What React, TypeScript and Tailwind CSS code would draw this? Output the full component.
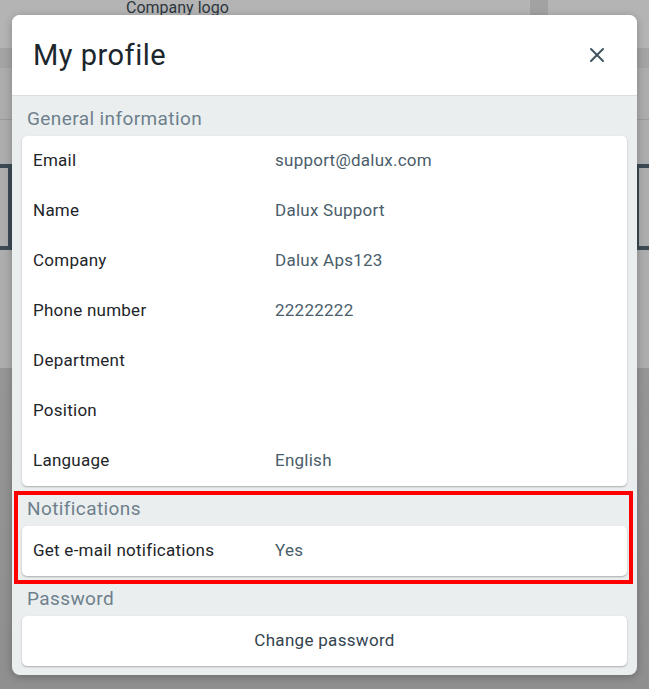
import { X } from "lucide-react";

const generalRows = [
  { label: "Email", value: "support@dalux.com" },
  { label: "Name", value: "Dalux Support" },
  { label: "Company", value: "Dalux Aps123" },
  { label: "Phone number", value: "22222222" },
  { label: "Department", value: "" },
  { label: "Position", value: "" },
  { label: "Language", value: "English" },
];

const Row = ({ label, value }: { label: string; value: string }) => (
  <div className="flex h-[50px] items-center pl-[11px] tracking-[0.25px]">
    <span className="w-[242px] text-[17px] text-[#1e2529]">{label}</span>
    <span className="text-[17px] text-[#4a5d6a]">{value}</span>
  </div>
);

const SectionTitle = ({ children }: { children: string }) => (
  <div className="flex h-[40px] items-end pb-[5px] pl-[5px] text-[19px] leading-[24px] tracking-[0.4px] text-[#6e808c]">
    {children}
  </div>
);

const Card = ({ children }: { children: React.ReactNode }) => (
  <div className="rounded-[5px] bg-white shadow-[0_1px_2px_rgba(0,0,0,0.28)]">
    {children}
  </div>
);

const App = () => {
  return (
    <div
      className="relative h-[689px] w-[649px] overflow-hidden"
      style={{ fontFamily: "Roboto, 'Liberation Sans', sans-serif" }}
    >
      {/* dimmed page behind the dialog */}
      <div className="flex h-full flex-col">
        <div className="flex h-[48px] bg-[#b4b4b4]">
          <span className="ml-[126px] -mt-[4px] text-[16px] text-[#2c3740]">Company logo</span>
          <div className="ml-auto mr-[101px] w-[18px] bg-[#a2a2a2]" />
        </div>
        <div className="h-[20px] bg-[#a4a4a4]" />
        <div className="flex h-[300px] flex-col bg-[#adadad]">
          <div className="h-[52px] border-b border-[#9a9a9a] text-[20px] font-medium leading-[64px] text-[#1b2227] -ml-[14px]">
            e
          </div>
          <div className="mt-[44px] flex justify-between">
            <div className="h-[86px] w-[12px] border-y-[4px] border-r-[4px] border-[#3b4a55]" />
            <div className="h-[86px] w-[14px] rounded-l-[3px] border-y-[4px] border-l-[4px] border-[#3b4a55]" />
          </div>
        </div>
        <div className="flex-1 bg-gradient-to-b from-[#969696] to-[#8f8f8f]" />
      </div>

      {/* dialog */}
      <div className="absolute left-[12px] top-[15px] flex h-[660px] w-[625px] flex-col overflow-hidden rounded-[8px] bg-[#eaeeef] shadow-[0_2px_8px_rgba(0,0,0,0.25)]">
        <div className="flex h-[81px] shrink-0 items-center justify-between border-b border-[#d9dee1] bg-white pl-[21px] pr-[28px]">
          <h1 className="text-[29px] leading-none tracking-[0.5px] text-[#1c262d]">My profile</h1>
          <X size={24} strokeWidth={2} className="text-[#3f5361]" />
        </div>
        <div className="px-[10px]">
          <SectionTitle>General information</SectionTitle>
          <Card>
            {generalRows.map((r) => (
              <Row key={r.label} label={r.label} value={r.value} />
            ))}
          </Card>
          <SectionTitle>Notifications</SectionTitle>
          <Card>
            <Row label="Get e-mail notifications" value="Yes" />
          </Card>
          <SectionTitle>Password</SectionTitle>
          <Card>
            <button className="flex h-[50px] w-full items-center justify-center text-[17px] tracking-[0.3px] text-[#33444f]">
              Change password
            </button>
          </Card>
        </div>
      </div>

      {/* highlight annotation */}
      <div className="pointer-events-none absolute left-[14px] top-[491px] h-[93px] w-[619px] border-[4px] border-[#ff0000]" />
    </div>
  );
};

export default App;
